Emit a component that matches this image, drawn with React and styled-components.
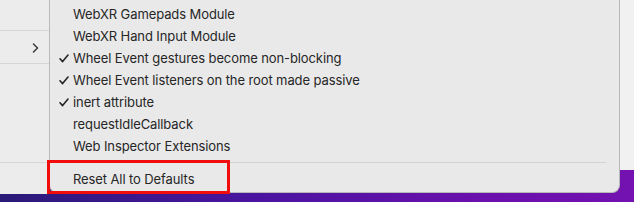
import React from 'react';
import styled, { createGlobalStyle } from 'styled-components';

const Global = createGlobalStyle`
  html, body {
    margin: 0;
    padding: 0;
    background: #ececec;
  }
`;

const Screen = styled.div`
  position: relative;
  width: 634px;
  height: 202px;
  overflow: hidden;
  display: flex;
  align-items: flex-start;
  background: linear-gradient(90deg, #2a1a78 0%, #4a14a0 40%, #6a10ac 75%, #7312b0 100%);
  font-family: Inter, 'Noto Sans', 'Liberation Sans', sans-serif;
`;

const LeftWindow = styled.div`
  width: 49px;
  height: 194px;
  flex: none;
  background: #ececec;
  display: flex;
  flex-direction: column;
`;

const SideRow = styled.div`
  height: ${(p) => p.h}px;
  flex: none;
  border-bottom: ${(p) => (p.line ? '1px solid #d6d6d6' : 'none')};
  display: flex;
  align-items: center;
  justify-content: flex-end;
  padding-right: 10px;
  box-sizing: border-box;
`;

const Chevron = styled.svg`
  width: 7px;
  height: 10px;
  margin-top: 1px;
`;

const Menu = styled.div`
  width: 571px;
  height: 193px;
  flex: none;
  box-sizing: border-box;
  background: #e9e9e9;
  border-left: 1px solid #b9b9b9;
  border-right: 1px solid #b9b9b9;
  border-bottom: 1px solid #b9b9b9;
  border-radius: 0 0 8px 8px;
  padding: 3px 0 0;
  display: flex;
  flex-direction: column;
`;

const Item = styled.div`
  height: 22px;
  flex: none;
  display: flex;
  align-items: center;
  padding-left: 9px;
  font-size: 13px;
  letter-spacing: -0.1px;
  color: #262626;
  white-space: nowrap;
`;

const CheckSlot = styled.span`
  width: 14px;
  flex: none;
  display: flex;
  align-items: center;
`;

const Separator = styled.div`
  height: 1px;
  flex: none;
  margin: 5px 13px 5px 13px;
  background: #d2d2d2;
`;

const RightWindow = styled.div`
  width: 14px;
  height: 170px;
  flex: none;
  background: #f1f1f1;
`;

const Highlight = styled.div`
  position: absolute;
  left: 47px;
  top: 160px;
  width: 183px;
  height: 34px;
  box-sizing: border-box;
  border: 3px solid #f20d0d;
`;

const Check = () => (
  <svg width="10" height="9" viewBox="0 0 10 9">
    <path d="M1 4.8 L3.6 7.6 L9 1" fill="none" stroke="#262626" strokeWidth="1.6" strokeLinecap="round" strokeLinejoin="round" />
  </svg>
);

const items = [
  { label: 'WebXR Gamepads Module' },
  { label: 'WebXR Hand Input Module' },
  { label: 'Wheel Event gestures become non-blocking', checked: true },
  { label: 'Wheel Event listeners on the root made passive', checked: true },
  { label: 'inert attribute', checked: true },
  { label: 'requestIdleCallback' },
  { label: 'Web Inspector Extensions' },
];

export default function App() {
  return (
    <>
      <Global />
      <Screen>
        <LeftWindow>
          <SideRow h={31} line />
          <SideRow h={33} line>
            <Chevron viewBox="0 0 7 10">
              <path d="M1.5 1 L5.5 5 L1.5 9" fill="none" stroke="#3a3a3a" strokeWidth="1.5" strokeLinecap="round" strokeLinejoin="round" />
            </Chevron>
          </SideRow>
          <SideRow h={99} line />
        </LeftWindow>
        <Menu>
          {items.map((it) => (
            <Item key={it.label}>
              <CheckSlot>{it.checked && <Check />}</CheckSlot>
              {it.label}
            </Item>
          ))}
          <Separator />
          <Item>
            <CheckSlot />
            Reset All to Defaults
          </Item>
        </Menu>
        <RightWindow />
        <Highlight />
      </Screen>
    </>
  );
}
